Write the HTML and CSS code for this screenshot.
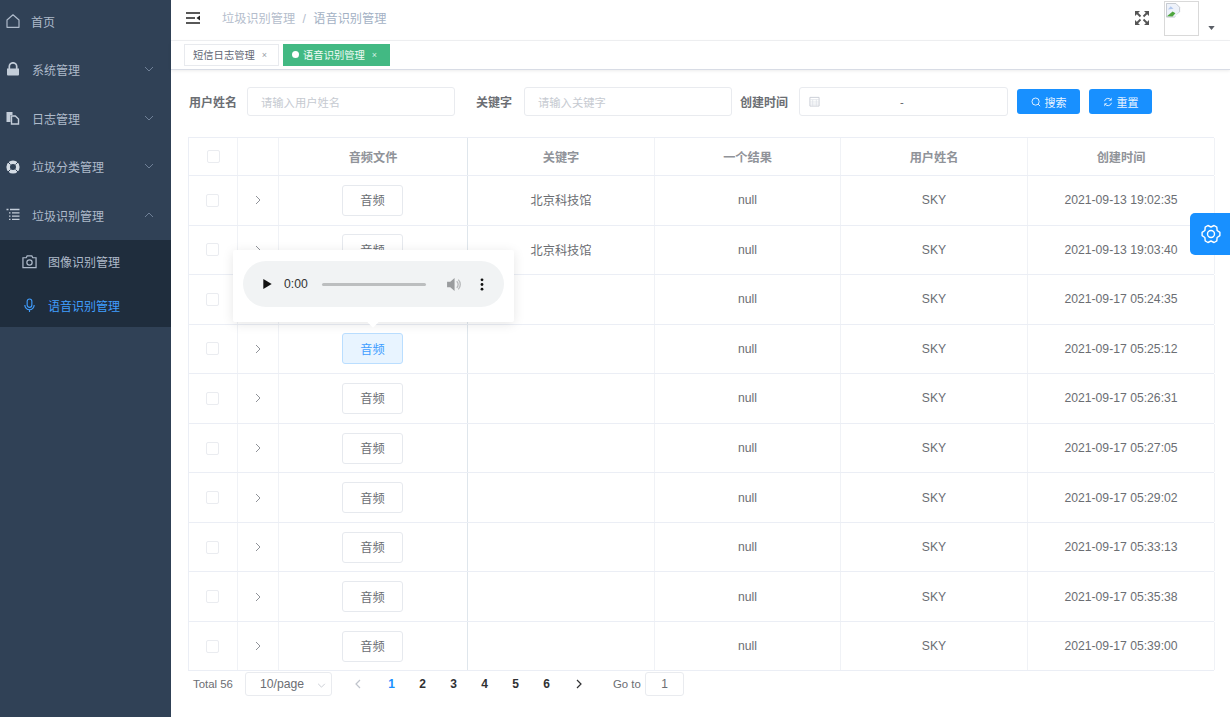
FILE: index.html
```html
<!DOCTYPE html>
<html lang="zh-CN">
<head>
<meta charset="UTF-8">
<title>语音识别管理</title>
<link rel="stylesheet" href="styles.css">
</head>
<body>
<div class="app">

    <!-- sidebar -->
    <aside class="sidebar">
        <div class="menu-item">
            <svg class="menu-icon" viewBox="0 0 14 14"><path d="M1 6 7 .8 13 6v7.300H1z" fill="none" stroke="#aebaca" stroke-width="1.200" stroke-linejoin="round"/></svg>
            <span>首页</span>
        </div>
        <div class="menu-item">
            <svg class="menu-icon" viewBox="0 0 14 14"><path d="M1 6.500h12v6a1 1 0 0 1-1 1H2a1 1 0 0 1-1-1z" fill="#c3cdd9"/><path d="M3.300 7V4.500a3.700 3.700 0 0 1 7.400 0V7" fill="none" stroke="#c3cdd9" stroke-width="1.700"/></svg>
            <span>系统管理</span>
            <svg class="caret" viewBox="0 0 10 6"><path d="M1 1l4 4 4-4" fill="none" stroke="#6f8097"/></svg>
        </div>
        <div class="menu-item">
            <svg class="menu-icon" viewBox="0 0 14 14"><path d="M.5 1h6v3H4.500v7H.5z" fill="#c3cdd9"/><path d="M5.500 5h3.800l3.200 3v5H5.500z" fill="none" stroke="#c3cdd9" stroke-width="1.400"/></svg>
            <span>日志管理</span>
            <svg class="caret" viewBox="0 0 10 6"><path d="M1 1l4 4 4-4" fill="none" stroke="#6f8097"/></svg>
        </div>
        <div class="menu-item">
            <svg class="menu-icon" viewBox="0 0 14 14"><circle cx="7" cy="7" r="4.800" fill="none" stroke="#d3dbe4" stroke-width="3.600"/><path d="M1.500 1.500l3 3M12.500 1.500l-3 3M1.500 12.500l3-3M12.500 12.500l-3-3" stroke="#304156"/></svg>
            <span>垃圾分类管理</span>
            <svg class="caret" viewBox="0 0 10 6"><path d="M1 1l4 4 4-4" fill="none" stroke="#6f8097"/></svg>
        </div>
        <div class="menu-item">
            <svg class="menu-icon" viewBox="0 0 14 14"><path d="M.5 1.500h2M4 1.500h9.500M3 4.800h1.500M6 4.800h7.500M3 8.100h1.500M6 8.100h7.500M3 11.400h1.500M6 11.400h7.500" fill="none" stroke="#c3cdd9" stroke-width="1.300"/></svg>
            <span>垃圾识别管理</span>
            <svg class="caret" viewBox="0 0 10 6"><path d="M1 5l4-4 4 4" fill="none" stroke="#6f8097"/></svg>
        </div>
        <div class="submenu">
            <div class="sub-item">
                <svg class="sub-icon" viewBox="0 0 16 16"><path d="M1 4h3.500l1-2h5l1 2H15v10.500H1z" fill="none" stroke="#aebaca" stroke-width="1.300"/><circle cx="8" cy="9" r="2.800" fill="none" stroke="#aebaca" stroke-width="1.300"/></svg>
                <span>图像识别管理</span>
            </div>
            <div class="sub-item active">
                <svg class="sub-icon" viewBox="0 0 16 16"><rect x="5.500" y="1" width="5" height="9" rx="2.500" fill="none" stroke="#409eff" stroke-width="1.200"/><path d="M3 7.500a5 5 0 0 0 10 0M8 12.500V15" fill="none" stroke="#409eff" stroke-width="1.200"/></svg>
                <span>语音识别管理</span>
            </div>
        </div>
    </aside>

    <div class="main">
        <!-- top bar -->
        <header class="navbar">
            <svg class="hamburger" viewBox="0 0 14 12"><path d="M0 1h14M0 6h9M0 11h14" stroke="#222" stroke-width="1.400"/><path d="M14 3.500v5L10.500 6z" fill="#222"/></svg>
            <div class="crumbs">
                <span class="crumb-first">垃圾识别管理</span>
                <span class="crumb-sep">/</span>
                <span class="crumb-last">语音识别管理</span>
            </div>
            <svg class="fullscreen" viewBox="0 0 16 16"><path d="M1 1h5L1 6zM15 1v5l-5-5zM1 15v-5l5 5zM15 15h-5l5-5z" fill="#555"/><path d="M2 2l4.500 4.500M14 2 9.500 6.500M2 14l4.500-4.500M14 14 9.500 9.500" stroke="#555" stroke-width="1.800"/></svg>
            <div class="avatar">
                <svg class="broken-img" viewBox="0 0 16 16"><path d="M.5.5h10l4 4v5l-5 5.500H.5z" fill="#eef2fa" stroke="#b4b9c2" stroke-width=".8"/><path d="M1 14l6-5 3 2-3 3.500z" fill="#4fa63f"/><path d="M2 7l3-3.500L8 6z" fill="#b2c8ee"/><path d="M9 14.500l6-5v5z" fill="#fff"/></svg>
            </div>
            <svg class="avatar-caret" viewBox="0 0 8 5"><path d="M0 0h8L4 5z" fill="#5a5e66"/></svg>
        </header>

        <!-- open tabs -->
        <div class="tags">
            <div class="tag">短信日志管理<span class="tag-close">×</span></div>
            <div class="tag tag-on"><i class="tag-dot"></i>语音识别管理<span class="tag-close">×</span></div>
        </div>

        <div class="content">
            <!-- search form -->
            <form class="search">
                <label class="search-label">用户姓名</label>
                <div class="input input-name">请输入用户姓名</div>
                <label class="search-label label-key">关键字</label>
                <div class="input input-key">请输入关键字</div>
                <label class="search-label label-time">创建时间</label>
                <div class="input input-date">
                    <svg class="date-icon" viewBox="0 0 12 12"><path d="M1 1.500h10v9.500H1z" fill="none" stroke="#c8ccd4"/><path d="M1 4h10M1 6.500h10M1 8.800h10M4 4v7M8 4v7" stroke="#dcdfe6" stroke-width=".8"/></svg>
                    <span class="date-sep">-</span>
                </div>
                <button type="button" class="btn">
                    <svg class="btn-icon" viewBox="0 0 12 12"><circle cx="5.500" cy="5.500" r="4.300" fill="none" stroke="#fff"/><path d="M8.500 8.500l2.500 2.500" stroke="#fff"/></svg>搜索
                </button>
                <button type="button" class="btn">
                    <svg class="btn-icon" viewBox="0 0 12 12"><path d="M1.800 5a4.300 4.300 0 0 1 7.700-1.600M10.200 7a4.300 4.300 0 0 1-7.700 1.600" fill="none" stroke="#fff"/><path d="M10 1v3H7M2 11V8h3" fill="none" stroke="#fff" stroke-width=".8"/></svg>重置
                </button>
            </form>

            <!-- table -->
            <div class="table">
                <div class="row head">
                    <div class="cell"><i class="check"></i></div>
                    <div class="cell"></div>
                    <div class="cell split">音频文件</div>
                    <div class="cell">关键字</div>
                    <div class="cell">一个结果</div>
                    <div class="cell">用户姓名</div>
                    <div class="cell">创建时间</div>
                </div>
                <div class="row">
                    <div class="cell"><i class="check"></i></div>
                    <div class="cell"><svg class="expand" viewBox="0 0 6 10"><path d="M1 1l4 4-4 4" fill="none" stroke="#909399"/></svg></div>
                    <div class="cell split"><span class="audio-btn">音频</span></div>
                    <div class="cell">北京科技馆</div>
                    <div class="cell">null</div>
                    <div class="cell">SKY</div>
                    <div class="cell">2021-09-13 19:02:35</div>
                </div>
                <div class="row">
                    <div class="cell"><i class="check"></i></div>
                    <div class="cell"><svg class="expand" viewBox="0 0 6 10"><path d="M1 1l4 4-4 4" fill="none" stroke="#909399"/></svg></div>
                    <div class="cell split"><span class="audio-btn">音频</span></div>
                    <div class="cell">北京科技馆</div>
                    <div class="cell">null</div>
                    <div class="cell">SKY</div>
                    <div class="cell">2021-09-13 19:03:40</div>
                </div>
                <div class="row">
                    <div class="cell"><i class="check"></i></div>
                    <div class="cell"><svg class="expand" viewBox="0 0 6 10"><path d="M1 1l4 4-4 4" fill="none" stroke="#909399"/></svg></div>
                    <div class="cell split"><span class="audio-btn">音频</span></div>
                    <div class="cell"></div>
                    <div class="cell">null</div>
                    <div class="cell">SKY</div>
                    <div class="cell">2021-09-17 05:24:35</div>
                </div>
                <div class="row">
                    <div class="cell"><i class="check"></i></div>
                    <div class="cell"><svg class="expand" viewBox="0 0 6 10"><path d="M1 1l4 4-4 4" fill="none" stroke="#909399"/></svg></div>
                    <div class="cell split"><span class="audio-btn audio-on">音频</span></div>
                    <div class="cell"></div>
                    <div class="cell">null</div>
                    <div class="cell">SKY</div>
                    <div class="cell">2021-09-17 05:25:12</div>
                </div>
                <div class="row">
                    <div class="cell"><i class="check"></i></div>
                    <div class="cell"><svg class="expand" viewBox="0 0 6 10"><path d="M1 1l4 4-4 4" fill="none" stroke="#909399"/></svg></div>
                    <div class="cell split"><span class="audio-btn">音频</span></div>
                    <div class="cell"></div>
                    <div class="cell">null</div>
                    <div class="cell">SKY</div>
                    <div class="cell">2021-09-17 05:26:31</div>
                </div>
                <div class="row">
                    <div class="cell"><i class="check"></i></div>
                    <div class="cell"><svg class="expand" viewBox="0 0 6 10"><path d="M1 1l4 4-4 4" fill="none" stroke="#909399"/></svg></div>
                    <div class="cell split"><span class="audio-btn">音频</span></div>
                    <div class="cell"></div>
                    <div class="cell">null</div>
                    <div class="cell">SKY</div>
                    <div class="cell">2021-09-17 05:27:05</div>
                </div>
                <div class="row">
                    <div class="cell"><i class="check"></i></div>
                    <div class="cell"><svg class="expand" viewBox="0 0 6 10"><path d="M1 1l4 4-4 4" fill="none" stroke="#909399"/></svg></div>
                    <div class="cell split"><span class="audio-btn">音频</span></div>
                    <div class="cell"></div>
                    <div class="cell">null</div>
                    <div class="cell">SKY</div>
                    <div class="cell">2021-09-17 05:29:02</div>
                </div>
                <div class="row">
                    <div class="cell"><i class="check"></i></div>
                    <div class="cell"><svg class="expand" viewBox="0 0 6 10"><path d="M1 1l4 4-4 4" fill="none" stroke="#909399"/></svg></div>
                    <div class="cell split"><span class="audio-btn">音频</span></div>
                    <div class="cell"></div>
                    <div class="cell">null</div>
                    <div class="cell">SKY</div>
                    <div class="cell">2021-09-17 05:33:13</div>
                </div>
                <div class="row">
                    <div class="cell"><i class="check"></i></div>
                    <div class="cell"><svg class="expand" viewBox="0 0 6 10"><path d="M1 1l4 4-4 4" fill="none" stroke="#909399"/></svg></div>
                    <div class="cell split"><span class="audio-btn">音频</span></div>
                    <div class="cell"></div>
                    <div class="cell">null</div>
                    <div class="cell">SKY</div>
                    <div class="cell">2021-09-17 05:35:38</div>
                </div>
                <div class="row">
                    <div class="cell"><i class="check"></i></div>
                    <div class="cell"><svg class="expand" viewBox="0 0 6 10"><path d="M1 1l4 4-4 4" fill="none" stroke="#909399"/></svg></div>
                    <div class="cell split"><span class="audio-btn">音频</span></div>
                    <div class="cell"></div>
                    <div class="cell">null</div>
                    <div class="cell">SKY</div>
                    <div class="cell">2021-09-17 05:39:00</div>
                </div>
            </div>

            <!-- pagination -->
            <div class="pager">
                <span class="total">Total 56</span>
                <div class="page-size">10/page
                    <svg class="page-caret" viewBox="0 0 10 6"><path d="M1 1l4 4 4-4" fill="none" stroke="#c0c4cc"/></svg>
                </div>
                <svg class="page-arrow arrow-prev" viewBox="0 0 6 10"><path d="M5 1 1 5l4 4" fill="none" stroke="#c0c4cc" stroke-width="1.200"/></svg>
                <span class="page-num page-on">1</span>
                <span class="page-num">2</span>
                <span class="page-num">3</span>
                <span class="page-num">4</span>
                <span class="page-num">5</span>
                <span class="page-num">6</span>
                <svg class="page-arrow arrow-next" viewBox="0 0 6 10"><path d="M1 1l4 4-4 4" fill="none" stroke="#303133" stroke-width="1.200"/></svg>
                <span class="goto">Go to</span>
                <div class="goto-input">1</div>
            </div>
        </div>
    </div>

    <!-- audio popover over the table -->
    <div class="popover">
        <div class="player">
            <svg class="play" viewBox="0 0 10 12"><path d="M0 0l10 6-10 6z" fill="#111"/></svg>
            <span class="player-time">0:00</span>
            <div class="player-track"></div>
            <svg class="volume" viewBox="0 0 14 14"><path d="M1 4.500h3L8 1v12L4 9.500H1z" fill="#9a9c9e"/><path d="M10 4a4 4 0 0 1 0 6M11.500 2.500a6.500 6.500 0 0 1 0 9" fill="none" stroke="#b5b7b9" stroke-width="1.200"/></svg>
            <svg class="more" viewBox="0 0 4 14"><circle cx="2" cy="2" r="1.500" fill="#111"/><circle cx="2" cy="7" r="1.500" fill="#111"/><circle cx="2" cy="12" r="1.500" fill="#111"/></svg>
        </div>
        <i class="popover-arrow"></i>
    </div>

    <!-- settings tab -->
    <div class="settings">
        <svg class="gear" viewBox="0 0 20 20"><path d="M18.900 8.400v3.200l-2.800 1.900-.3 3.400-2.700 1.600L10 17l-3.100 1.500-2.700-1.600-.3-3.400-2.800-1.900V8.400l2.800-1.900.3-3.400 2.700-1.600L10 3l3.100-1.500 2.700 1.600.3 3.400z" fill="none" stroke="#fff" stroke-width="1.400" stroke-linejoin="round"/><circle cx="10" cy="10" r="3.500" fill="none" stroke="#fff" stroke-width="1.400"/></svg>
    </div>
</div>
</body>
</html>
```

FILE: styles.css
```css
* { box-sizing: border-box; }
body {
    margin: 0;
    background: #fff;
    font-family: "Liberation Sans", "Noto Sans CJK SC", sans-serif;
    font-size: 12px;
    color: #6b6e73;
    overflow: hidden;
}
.app { position: relative; display: flex; width: 1230px; height: 717px; }

/* sidebar */
.sidebar { width: 171px; flex-shrink: 0; background: #304156; color: #aebaca; overflow: hidden; }
.menu-item { display: flex; align-items: center; height: 48.6px; padding-left: 6px; position: relative; }
.menu-item:first-child { margin-top: -3px; height: 48.2px; }
.menu-item:first-child .menu-icon { margin-right: 11px; }
.menu-icon { width: 14px; height: 14px; margin-right: 12px; flex-shrink: 0; }
.caret { position: absolute; right: 17px; top: 21px; width: 10px; height: 6px; }
.submenu { background: #1f2d3d; height: 87px; }
.sub-item { display: flex; align-items: center; height: 44px; padding-left: 22px; }
.sub-icon { width: 15px; height: 15px; margin-right: 11px; }
.sub-item.active { color: #409eff; }

/* top bar */
.main { flex: 1; min-width: 0; }
.navbar { display: flex; align-items: center; height: 41px; padding-left: 15px; border-bottom: 1px solid #f0f1f3; }
.hamburger { width: 14px; height: 12px; margin-top: -5px; }
.crumbs { margin-left: 22px; margin-top: -5px; font-size: 12.2px; }
.crumb-first { color: #b4bdcc; }
.crumb-sep { color: #b4bdcc; margin: 0 4px; }
.crumb-last { color: #a3b1c4; }
.fullscreen { width: 16px; height: 16px; margin-left: auto; margin-top: -5px; }
.avatar { width: 35px; height: 35px; margin-left: 14px; margin-top: -3px; border: 1px solid #d9d9d9; }
.broken-img { display: block; width: 15px; height: 15px; margin: 1px 0 0 1px; }
.avatar-caret { width: 7px; height: 4px; margin: 16px 15px 0 9px; }

/* tabs */
.tags {
    display: flex;
    gap: 4px;
    height: 29px;
    padding: 3px 0 0 13px;
    border-bottom: 1px solid #d8dce5;
    box-shadow: 0 1px 3px rgba(0, 0, 0, .08);
}
.tag { display: flex; align-items: center; height: 22px; padding: 0 11px 1px 8px; border: 1px solid #e8eaee; font-size: 10.3px; color: #5f6673; }
.tag-close { margin-left: 7px; font-size: 9px; color: #9aa0a8; }
.tag-on { background: #42b983; border-color: #42b983; color: #f2fbf6; padding-right: 12px; }
.tag-on .tag-close { color: #d5f0e2; }
.tag-dot { width: 7px; height: 7px; margin-right: 4px; border-radius: 50%; background: #fff; }

/* search form */
.content { padding: 17px 16px 0 17px; }
.search { display: flex; align-items: center; height: 29px; }
.search-label { font-weight: bold; margin-right: 10px; width: 49px; white-space: nowrap; padding-left: 1px; }
.label-key { margin-left: 21px; width: 37px; margin-right: 11px; padding-left: 0; }
.label-time { margin-left: 8px; padding-left: 0; }
.input { display: flex; align-items: center; height: 29px; padding-left: 13px; border: 1px solid #e9ebef; border-radius: 3px; color: #c6cad1; font-size: 11.3px; }
.input-name, .input-key { width: 208px; }
.input-date { width: 209px; padding-left: 9px; position: relative; }
.date-icon { width: 11px; height: 11px; }
.date-sep { margin-left: 80px; color: #606266; }
.btn {
    display: flex;
    align-items: center;
    justify-content: center;
    width: 63px;
    height: 25px;
    margin-left: 9px;
    padding: 0;
    border: 0;
    border-radius: 3px;
    background: #1890ff;
    color: #eaf4ff;
    font: inherit;
    font-size: 11px;
}
.btn-icon { width: 10px; height: 10px; margin-right: 4px; }

/* table */
.table { margin-top: 21px; width: 1026px; border-top: 1px solid #ebeef5; border-left: 1px solid #ebeef5; }
.row { display: grid; grid-template-columns: 49px 41px 189px 187px 186px 187px 187px; height: 49.55px; border-bottom: 1px solid #ebeef5; }
.head { height: 38px; font-weight: bold; color: #909399; }
.cell { display: flex; align-items: center; justify-content: center; border-right: 1px solid #f0f2f6; font-size: 12.2px; }
.split { border-right-color: #dfe6ec; }
.check { width: 13px; height: 13px; margin-right: 2px; border: 1px solid #eaecf0; border-radius: 2px; }
.head .check { margin-right: 0; }
.expand { width: 6px; height: 10px; }
.audio-btn { display: flex; align-items: center; justify-content: center; width: 61px; height: 31px; margin-right: 1px; border: 1px solid #e6e9ee; border-radius: 3px; }
.audio-on { background: #e8f4ff; border-color: #badeff; color: #409eff; }

/* pagination */
.pager { display: flex; align-items: center; height: 26px; padding-left: 5px; }
.total { width: 52px; font-size: 11.4px; }
.page-size { display: flex; align-items: center; width: 87px; height: 24px; padding-left: 14px; border: 1px solid #e9ebef; border-radius: 3px; font-size: 12.2px; position: relative; }
.page-caret { position: absolute; right: 5px; top: 10px; width: 9px; height: 5px; }
.page-arrow { width: 6px; height: 10px; }
.arrow-prev { margin: 0 15px 0 23px; }
.arrow-next { margin: 0 31px 0 14px; }
.page-num { width: 31px; text-align: center; font-weight: bold; color: #303133; }
.page-on { color: #1890ff; }
.goto { width: 32px; font-size: 11.4px; }
.goto-input { width: 39px; height: 24px; line-height: 22px; text-align: center; border: 1px solid #e9ebef; border-radius: 3px; }

/* popover with the audio player */
.popover {
    position: absolute;
    left: 233px;
    top: 250px;
    width: 281px;
    height: 72px;
    padding: 11px 10px;
    background: #fff;
    border-radius: 2px;
    box-shadow: 0 2px 12px rgba(0, 0, 0, .1);
}
.popover-arrow { position: absolute; left: 136px; bottom: -4px; width: 8px; height: 8px; background: #fff; transform: rotate(45deg); }
.player { display: flex; align-items: center; height: 46px; padding-left: 20px; border-radius: 23px; background: #f1f3f4; color: #333; }
.play { width: 9px; height: 10px; }
.player-time { margin-left: 12px; font-size: 12.2px; }
.player-track { width: 104px; height: 3px; margin-left: 14px; border-radius: 2px; background: #bcbebf; }
.volume { width: 15px; height: 15px; margin-left: 20px; }
.more { width: 4px; height: 13px; margin-left: 19px; }

/* settings tab */
.settings {
    position: absolute;
    right: 0;
    top: 213px;
    display: flex;
    align-items: center;
    justify-content: center;
    width: 40px;
    height: 42px;
    border-radius: 5px 0 0 5px;
    background: #1890ff;
}
.gear { width: 20px; height: 20px; margin-left: 2px; }
```
